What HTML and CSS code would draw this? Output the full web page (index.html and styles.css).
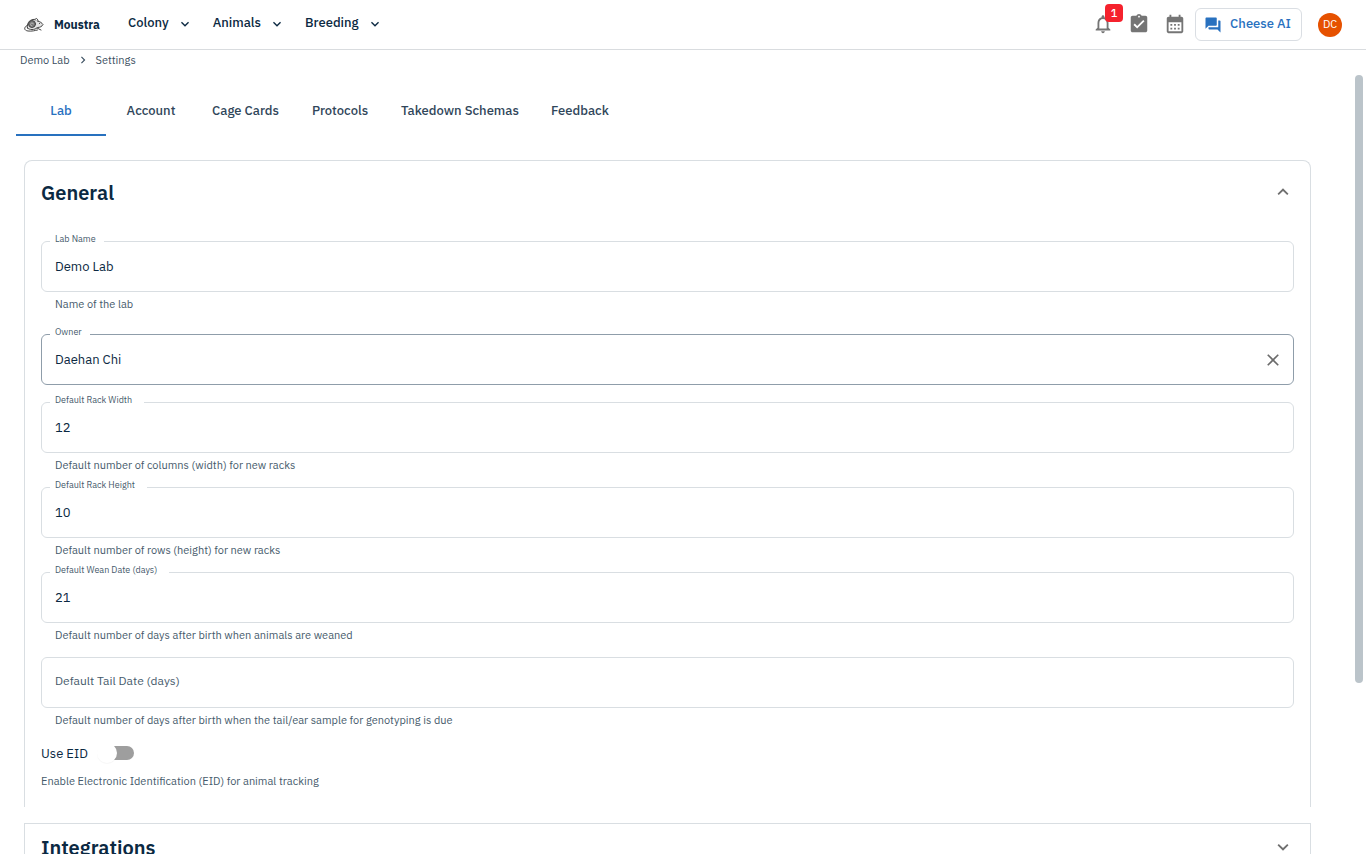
FILE: index.html
```
<!DOCTYPE html>
<html lang="en">
<head>
<meta charset="utf-8">
<title>Moustra - Settings</title>
<link rel="stylesheet" href="styles.css">
</head>
<body>

<header class="topbar">
    <a href="#" class="brand">
        <svg class="logo" width="20" height="16" viewBox="0 0 40 32" fill="none" stroke="#444" stroke-width="2" stroke-linecap="round">
            <path d="M7 22C5 13 11 6 18 5c4-1 7 1 9 3 5 1 9 4 11 7-2 4-6 6-11 6-3 3-7 4-11 4-4 0-7-1-9-3z" fill="#e4e4e4"/>
            <circle cx="16" cy="14" r="7" fill="#777"/>
            <path d="M19 14a3 3 0 1 0-3 4" stroke="#bbb"/>
            <path d="M22 6c0-5 6-4 6 2" fill="#fff"/>
            <circle cx="31" cy="13" r="1" fill="#222" stroke="none"/>
            <path d="M6 17c-7 4-6 10 2 11 8 1 14-1 19-2" />
            <path d="M26 22l8 4"/>
        </svg>
        <span>Moustra</span>
    </a>
    <nav class="menu">
        <button type="button">Colony <svg width="16" height="16" viewBox="0 0 24 24"><path d="M7.4 8.6 12 13.2l4.6-4.6L18 10l-6 6-6-6z"/></svg></button>
        <button type="button">Animals <svg width="16" height="16" viewBox="0 0 24 24"><path d="M7.4 8.6 12 13.2l4.6-4.6L18 10l-6 6-6-6z"/></svg></button>
        <button type="button">Breeding <svg width="16" height="16" viewBox="0 0 24 24"><path d="M7.4 8.6 12 13.2l4.6-4.6L18 10l-6 6-6-6z"/></svg></button>
    </nav>
    <div class="actions">
        <button type="button" class="icon-button" aria-label="Notifications">
            <svg width="22" height="22" viewBox="0 0 24 24"><path d="M12 22c1.1 0 2-.9 2-2h-4c0 1.1.9 2 2 2zm6-6v-5c0-3.070-1.630-5.640-4.500-6.320V4c0-.83-.67-1.500-1.500-1.500s-1.500.67-1.500 1.500v.68C7.640 5.360 6 7.920 6 11v5l-2 2v1h16v-1l-2-2zm-2 1H8v-6c0-2.480 1.510-4.500 4-4.500s4 2.020 4 4.500v6z"/></svg>
            <span class="badge">1</span>
        </button>
        <button type="button" class="icon-button" aria-label="Tasks">
            <svg width="22" height="22" viewBox="0 0 24 24"><path d="M19 3h-4.180C14.400 1.840 13.300 1 12 1s-2.400.84-2.820 2H5c-1.100 0-2 .9-2 2v14c0 1.100.9 2 2 2h14c1.100 0 2-.9 2-2V5c0-1.100-.9-2-2-2zm-7 0c.55 0 1 .45 1 1s-.45 1-1 1-1-.45-1-1 .45-1 1-1zm-2 14-4-4 1.410-1.410L10 14.170l6.590-6.590L18 9l-8 8z"/></svg>
        </button>
        <button type="button" class="icon-button" aria-label="Calendar">
            <svg width="22" height="22" viewBox="0 0 24 24"><path d="M19 4h-1V2h-2v2H8V2H6v2H5c-1.110 0-1.990.9-1.990 2L3 20c0 1.100.89 2 2 2h14c1.100 0 2-.9 2-2V6c0-1.100-.9-2-2-2zm0 16H5V10h14v10zM9 14H7v-2h2v2zm4 0h-2v-2h2v2zm4 0h-2v-2h2v2zm-8 4H7v-2h2v2zm4 0h-2v-2h2v2zm4 0h-2v-2h2v2z"/></svg>
        </button>
        <button type="button" class="cheese">
            <svg width="18" height="18" viewBox="0 0 24 24"><path d="M21 6h-2v9H6v2c0 .55.45 1 1 1h11l4 4V7c0-.55-.45-1-1-1zm-4 6V3c0-.55-.45-1-1-1H3c-.55 0-1 .45-1 1v14l4-4h10c.55 0 1-.45 1-1z"/></svg>
            <span>Cheese AI</span>
        </button>
        <button type="button" class="avatar">DC</button>
    </div>
</header>

<nav class="breadcrumb" aria-label="Breadcrumb">
    <a href="#">Demo Lab</a>
    <svg width="14" height="14" viewBox="0 0 24 24"><path d="M10 6 8.600 7.400l4.600 4.600-4.600 4.600L10 18l6-6z"/></svg>
    <a href="#">Settings</a>
</nav>

<div class="scroller">
    <main class="content">
        <div class="tabs" role="tablist">
            <button type="button" class="tab active" role="tab" aria-selected="true">Lab</button>
            <button type="button" class="tab" role="tab">Account</button>
            <button type="button" class="tab" role="tab">Cage Cards</button>
            <button type="button" class="tab" role="tab">Protocols</button>
            <button type="button" class="tab" role="tab">Takedown Schemas</button>
            <button type="button" class="tab" role="tab">Feedback</button>
        </div>

        <section class="panel open">
            <h2><button type="button" class="panel-header" aria-expanded="true">General
                <svg width="22" height="22" viewBox="0 0 24 24"><path d="m12 8-6 6 1.400 1.400 4.600-4.600 4.600 4.600L18 14z"/></svg>
            </button></h2>
            <form class="panel-body">
                <div class="field spaced">
                    <div class="box">
                        <label for="lab-name">Lab Name</label>
                        <input type="text" id="lab-name" value="Demo Lab">
                    </div>
                    <p class="hint">Name of the lab</p>
                </div>
                <div class="field spaced">
                    <div class="box hovered">
                        <label for="owner">Owner</label>
                        <input type="text" id="owner" value="Daehan Chi">
                        <button type="button" class="clear" aria-label="Clear">
                            <svg width="20" height="20" viewBox="0 0 24 24"><path d="M19 6.410 17.590 5 12 10.590 6.410 5 5 6.410 10.590 12 5 17.590 6.410 19 12 13.410 17.590 19 19 17.590 13.410 12z"/></svg>
                        </button>
                    </div>
                </div>
                <div class="field">
                    <div class="box wide">
                        <label for="rack-width">Default Rack Width</label>
                        <input type="number" id="rack-width" value="12">
                    </div>
                    <p class="hint">Default number of columns (width) for new racks</p>
                </div>
                <div class="field">
                    <div class="box wide">
                        <label for="rack-height">Default Rack Height</label>
                        <input type="number" id="rack-height" value="10">
                    </div>
                    <p class="hint">Default number of rows (height) for new racks</p>
                </div>
                <div class="field">
                    <div class="box wide">
                        <label for="wean-date">Default Wean Date (days)</label>
                        <input type="number" id="wean-date" value="21">
                    </div>
                    <p class="hint">Default number of days after birth when animals are weaned</p>
                </div>
                <div class="field">
                    <div class="box empty">
                        <label for="tail-date">Default Tail Date (days)</label>
                        <input type="number" id="tail-date">
                    </div>
                    <p class="hint">Default number of days after birth when the tail/ear sample for genotyping is due</p>
                </div>
                <div class="switch-row">
                    <label for="use-eid">Use EID</label>
                    <input type="checkbox" class="switch" id="use-eid">
                </div>
                <p class="note">Enable Electronic Identification (EID) for animal tracking</p>
            </form>
        </section>

        <section class="panel">
            <h2><button type="button" class="panel-header" aria-expanded="false">Integrations
                <svg width="22" height="22" viewBox="0 0 24 24"><path d="M7.400 8.600 12 13.200l4.600-4.600L18 10l-6 6-6-6z"/></svg>
            </button></h2>
        </section>
    </main>
    <div class="track"><div class="thumb"></div></div>
</div>

</body>
</html>
```
FILE: styles.css
```
* {
    box-sizing: border-box;
}
body {
    margin: 0;
    height: 100vh;
    display: flex;
    flex-direction: column;
    overflow: hidden;
    background: #fff;
    color: #0b2942;
    font-family: "IBM Plex Sans", Roboto, sans-serif;
    font-size: 13px;
}
button, input {
    font: inherit;
    color: inherit;
    background: none;
    border: 0;
    padding: 0;
    margin: 0;
}
a {
    color: inherit;
    text-decoration: none;
}
svg {
    fill: currentColor;
    flex: none;
}
h2, p {
    margin: 0;
}

/* top bar */
.topbar {
    display: flex;
    align-items: center;
    flex: none;
    height: 50px;
    padding: 0 24px;
    border-bottom: 1px solid #d9dcdf;
}
.brand {
    display: flex;
    align-items: center;
    gap: 10px;
    width: 104px;
    font-size: 12px;
    font-weight: 700;
}
.logo {
    fill: none;
}
.menu {
    display: flex;
    gap: 20px;
    padding-bottom: 5px;
}
.menu button {
    display: flex;
    align-items: center;
    gap: 8px;
    font-weight: 500;
}
.menu svg {
    margin-top: 4px;
}
.actions {
    display: flex;
    align-items: center;
    margin-left: auto;
}
.icon-button {
    position: relative;
    display: flex;
    align-items: center;
    justify-content: center;
    width: 36px;
    height: 36px;
    margin-bottom: 2px;
    color: #757575;
}
.badge {
    position: absolute;
    top: -2px;
    right: -2px;
    width: 18px;
    height: 18px;
    border-radius: 4px;
    background: #f5222d;
    color: #fff;
    font-size: 11px;
    font-weight: 500;
    line-height: 18px;
}
.cheese {
    display: flex;
    align-items: center;
    gap: 8px;
    height: 33px;
    margin: 0 16px 0 2px;
    padding: 0 10px 0 8px;
    border: 1px solid #dadee3;
    border-radius: 6px;
    color: #2871bf;
    font-weight: 500;
}
.cheese span {
    padding-bottom: 2px;
}
.avatar {
    width: 24px;
    height: 24px;
    padding-bottom: 1px;
    border-radius: 50%;
    background: #e65100;
    color: #fff;
    font-size: 11px;
}

.breadcrumb {
    display: flex;
    align-items: center;
    flex: none;
    gap: 6px;
    height: 25px;
    padding: 0 20px 6px;
    color: #3b4f61;
    font-size: 11px;
}

.scroller {
    display: flex;
    flex: 1;
    min-height: 0;
}
.content {
    flex: 1;
    min-width: 0;
    overflow: hidden;
    padding: 12px 44px 0 24px;
}
.track {
    width: 8px;
    margin-right: 3px;
}
.thumb {
    height: 78%;
    border-radius: 4px;
    background: #bbc4ca;
}

.tabs {
    display: flex;
    margin: 0 0 24px -8px;
}
.tab {
    min-width: 90px;
    height: 49px;
    padding: 0 16px;
    border-bottom: 2px solid transparent;
    color: #30465a;
    font-weight: 500;
}
.tab.active {
    border-color: #2871bf;
    color: #2871bf;
}

/* accordion panels */
.panel {
    border: 1px solid #d9dee2;
}
.panel.open {
    margin-bottom: 16px;
    border-bottom: 0;
    border-radius: 8px 8px 0 0;
}
.panel-header {
    display: flex;
    align-items: center;
    justify-content: space-between;
    width: 100%;
    height: 48px;
    padding: 0 16px 2px;
    font-size: 20px;
    font-weight: 600;
}
.panel.open .panel-header {
    height: 64px;
}
.panel-header svg {
    color: #707070;
}
.panel-body {
    padding: 16px 16px 17px;
}

/* form fields */
.field {
    margin-bottom: 13px;
}
.field.spaced {
    margin-bottom: 21px;
}
.field.spaced + .field.spaced {
    margin-bottom: 17px;
}
.box {
    position: relative;
    display: flex;
    align-items: center;
    height: 51px;
    padding: 0 10px 0 13px;
    border: 1px solid #d9dee2;
    border-radius: 6px;
}
.box.hovered {
    border-color: #8f9daa;
}
.box label {
    position: absolute;
    top: -9px;
    left: 8px;
    padding: 0 8px 0 5px;
    background: #fff;
    color: #465a6b;
    font-size: 9px;
    line-height: 12px;
}
.box.wide label {
    padding-right: 12px;
}
.box.empty label {
    top: 15px;
    font-size: 12px;
    line-height: 16px;
}
.box input {
    flex: 1;
    min-width: 0;
    height: 100%;
    outline: 0;
    appearance: textfield;
}
.clear {
    display: flex;
    color: #6b6b6b;
}
.hint {
    margin-top: 3px;
    padding-left: 14px;
}
.hint, .note {
    color: #465a6b;
    font-size: 11px;
    line-height: 18px;
}
.switch-row {
    display: flex;
    align-items: center;
    gap: 12px;
    height: 22px;
    margin-bottom: 8px;
}
.switch {
    position: relative;
    appearance: none;
    width: 34px;
    height: 14px;
    border-radius: 7px;
    background: #9e9e9e;
}
.switch::before {
    content: "";
    position: absolute;
    top: -3px;
    left: -3px;
    width: 20px;
    height: 20px;
    border-radius: 50%;
    background: #fff;
    box-shadow: 0 1px 1px rgba(0, 0, 0, 0.04);
}
```
